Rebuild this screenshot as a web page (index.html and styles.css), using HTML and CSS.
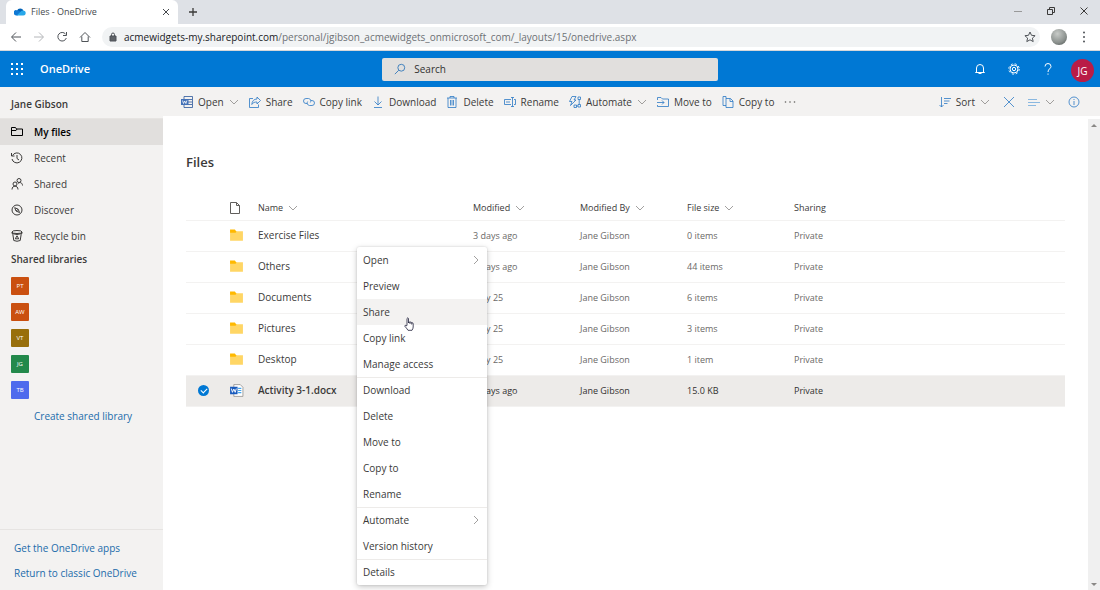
FILE: index.html
```html
<!DOCTYPE html>
<html lang="en">
<head>
  <meta charset="UTF-8">
  <title>Files - OneDrive</title>
  <link rel="stylesheet" href="styles.css">
</head>
<body>
  <!-- shared icons -->
  <svg class="sprite" aria-hidden="true">
    <symbol id="chevron" viewBox="0 0 10 10"><path d="M1 3l4 4 4-4"/></symbol>
    <symbol id="chevron-right" viewBox="0 0 10 10"><path d="M3 1l4 4-4 4"/></symbol>
    <symbol id="folder" viewBox="0 0 14 12">
      <path d="M1 1h4l1 1h7v9H1z" fill="#ffd665"/>
      <path d="M1 .5h4.500l1.500 2L6 3.500H1z" fill="#ffb900"/>
    </symbol>
  </svg>

  <div class="tabs">
    <div class="tab">
      <svg class="cloud" viewBox="0 0 14 10">
        <path d="M3.500 3.500A4 4 0 0 1 11 3.300L7 6z" fill="#0364b8"/>
        <path d="M1 8.500A3 3 0 0 1 4 3.200c2-.2 3 1.300 5 1.800L4 9H3Q1.700 9.200 1 8.500z" fill="#0f78d4"/>
        <path d="M8 4.500Q9 3 11 3.300A3 3 0 0 1 13.500 7q0 2-2.500 2H3z" fill="#28a8ea"/>
      </svg>
      <span>Files - OneDrive</span>
      <button class="tab-close" aria-label="Close tab">
        <svg viewBox="0 0 8 8"><path d="M1 1l6 6M7 1L1 7"/></svg>
      </button>
    </div>
    <button class="tab-new" aria-label="New tab">
      <svg viewBox="0 0 10 10"><path d="M5 1v8M1 5h8"/></svg>
    </button>
    <div class="window-buttons">
      <button aria-label="Minimize"><svg viewBox="0 0 8 8"><path d="M0 4.500h8" stroke="#999"/></svg></button>
      <button aria-label="Restore"><svg viewBox="0 0 8 8"><path d="M.5 2.500h5v5h-5zM2.500 2V.5h5v5H6"/></svg></button>
      <button aria-label="Close"><svg viewBox="0 0 8 8"><path d="M.5.5l7 7M7.500.5l-7 7"/></svg></button>
    </div>
  </div>

  <div class="address-bar">
    <button aria-label="Back"><svg viewBox="0 0 12 12"><path d="M11 6H2M6 1.500L1.500 6 6 10.500"/></svg></button>
    <button aria-label="Forward" class="disabled"><svg viewBox="0 0 12 12"><path d="M1 6h9M6 1.500L10.500 6 6 10.500"/></svg></button>
    <button aria-label="Reload"><svg viewBox="0 0 12 12"><path d="M9.500 3A4.300 4.300 0 1 0 10.300 7M10.500 1v3.500H7"/></svg></button>
    <button aria-label="Home"><svg viewBox="0 0 12 12"><path d="M1 6.500L6 1.500l5 5M2.800 5.500V10.500h6.400V5.500"/></svg></button>
    <div class="url">
      <svg class="lock" viewBox="0 0 8 10"><path d="M1 4h6v5H1z" fill="#5f6368"/><path d="M2.500 4V2.500a1.500 1.500 0 0 1 3 0V4"/></svg>
      <span class="url-text"><span class="host">acmewidgets-my.sharepoint.com</span>/personal/jgibson_acmewidgets_onmicrosoft_com/_layouts/15/onedrive.aspx</span>
      <button aria-label="Bookmark"><svg class="star" viewBox="0 0 12 12"><path d="M6 1l1.500 3.300 3.600.4-2.700 2.400.8 3.500L6 8.800l-3.200 1.800.8-3.500L.9 4.700l3.600-.4z"/></svg></button>
    </div>
    <span class="profile"></span>
    <button aria-label="Menu" class="more"><svg viewBox="0 0 12 12"><circle cx="6" cy="1.500" r="1"/><circle cx="6" cy="6" r="1"/><circle cx="6" cy="10.500" r="1"/></svg></button>
  </div>

  <header class="suite">
    <button class="waffle" aria-label="App launcher">
      <svg viewBox="0 0 12 12"><path d="M0 1h2m3 0h2m3 0h2M0 6h2m3 0h2m3 0h2M0 11h2m3 0h2m3 0h2"/></svg>
    </button>
    <a class="brand" href="#">OneDrive</a>
    <label class="search">
      <svg viewBox="0 0 14 14"><circle cx="8.500" cy="5.500" r="4"/><path d="M5.500 8.500L1 13"/></svg>
      <input type="search" placeholder="Search" aria-label="Search">
    </label>
    <div class="suite-actions">
      <button aria-label="Notifications"><svg viewBox="0 0 12 12"><path d="M2.500 9V5a3.500 3.500 0 0 1 7 0v4l1 .5h-9zM4.500 10.500h3"/></svg></button>
      <button aria-label="Settings"><svg viewBox="0 0 12 12"><circle cx="6" cy="6" r="1.700"/><circle cx="6" cy="6" r="4"/><circle class="teeth" cx="6" cy="6" r="5.200"/></svg></button>
      <button aria-label="Help"><svg viewBox="0 0 12 12"><path d="M3 3.500a3 3 0 0 1 6 0C9 5.500 6 6 6 9M6 10.500v1.200"/></svg></button>
      <button class="avatar">JG</button>
    </div>
  </header>

  <div class="app">
    <aside class="sidebar">
      <div class="owner">Jane Gibson</div>
      <nav>
        <a class="nav-item active" href="#"><svg viewBox="0 0 12 12"><path d="M.5 1.500h4l1 1.500h6v6.500H.5zM.5 4.500h4.500l1-1.500"/></svg>My files</a>
        <a class="nav-item" href="#"><svg viewBox="0 0 12 12"><path d="M1.500 3.500A5 5 0 1 1 1 7M.5 1v3h3M6 3v3.500l2 1.500"/></svg>Recent</a>
        <a class="nav-item" href="#"><svg viewBox="0 0 12 12"><circle cx="4" cy="6" r="2"/><circle cx="8" cy="2.500" r="2"/><path d="M1 11.500c0-4.500 6-4.500 6 0M7 5.500c2-2 4.500-.5 4.500 2"/></svg>Shared</a>
        <a class="nav-item" href="#"><svg viewBox="0 0 12 12"><circle cx="6" cy="6" r="5"/><path d="M3.700 3.700l3.500 1.500 1.300 3.300L5 7zM5 7l2-1.500"/></svg>Discover</a>
        <a class="nav-item" href="#"><svg viewBox="0 0 12 12"><ellipse cx="6" cy="2" rx="5" ry="1.500"/><path d="M1 2v1.500q5 2 10 0V2M1.800 4.200l1 6.300q3.200 1.500 6.400 0l1-6.300M4.300 8.800L6 5.800l1.700 3z"/></svg>Recycle bin</a>
      </nav>
      <h2>Shared libraries</h2>
      <ul class="libraries">
        <li><a class="tile orange" href="#">PT</a></li>
        <li><a class="tile orange" href="#">AW</a></li>
        <li><a class="tile olive" href="#">VT</a></li>
        <li><a class="tile green" href="#">JG</a></li>
        <li><a class="tile blue" href="#">TB</a></li>
      </ul>
      <a class="create" href="#">Create shared library</a>
      <div class="sidebar-footer">
        <a href="#">Get the OneDrive apps</a>
        <a href="#">Return to classic OneDrive</a>
      </div>
    </aside>

    <main>
      <div class="toolbar">
        <button><svg viewBox="0 0 12 12"><path d="M3 3V.5h8.500v11H3V9M7 3.500h4M7 6h4M7 8.500h4" stroke="#2b579a"/><path d="M0 3h7.500v6H0z" fill="#4472b8" stroke="none"/><path d="M1.500 4.500l1 3 1.200-2.500 1.200 2.500 1-3" stroke="#fff"/></svg>Open<svg class="chevron"><use href="#chevron"/></svg></button>
        <button><svg viewBox="0 0 12 12"><path d="M4 2.500H.5v9h9V8.500M8 1l3.500 3.500L8 8V6C5.500 6 4 6.500 2.800 8.500 3 5 5 3 8 3z"/></svg>Share</button>
        <button><svg viewBox="0 0 12 12"><path d="M4 7.500H3a2.500 2.500 0 0 1 0-5h2.500a2.500 2.500 0 0 1 1.800 4M8 4.500h1a2.500 2.500 0 0 1 0 5H6.500a2.500 2.500 0 0 1-1.800-4"/></svg>Copy link</button>
        <button><svg viewBox="0 0 12 12"><path d="M6 .5V9M2.500 5.500L6 9l3.500-3.500M2 11.500h8"/></svg>Download</button>
        <button><svg viewBox="0 0 12 12"><path d="M1 2h10M4 2V.5h4V2M2 2v9.500h8V2M4.500 4v5.500M6 4v5.500M7.500 4v5.500"/></svg>Delete</button>
        <button><svg viewBox="0 0 12 12"><path d="M7 3.500H.5v5H7M2 6h4M8.500 1.500v9M7 1.500h3M7 10.500h3M10 3.500h1.500v5H10"/></svg>Rename</button>
        <button><svg viewBox="0 0 12 12"><path d="M3 .5h4L5 4h2L1.500 9.500 3 5.500H.5zM9 1h2.500v2.500H9zM9 8.500h2.500V11H9zM5 9h2.500v2.500H5zM10.200 3.500v5M7.500 10H9"/></svg>Automate<svg class="chevron"><use href="#chevron"/></svg></button>
        <button><svg viewBox="0 0 12 12"><path d="M.5 4V1.500H4L5.500 3h6v7.500H.5V9M0 6.500h7M5 4.500l2 2-2 2"/></svg>Move to</button>
        <button><svg viewBox="0 0 12 12"><path d="M4 2.500V.5H1v9h3M4 2.500h4.500L11 5v6.500H4zM8 2.500v3h3"/></svg>Copy to</button>
        <button class="overflow" aria-label="More"><svg viewBox="0 0 12 12"><circle cx="1.500" cy="6" r=".8"/><circle cx="6" cy="6" r=".8"/><circle cx="10.500" cy="6" r=".8"/></svg></button>
        <div class="toolbar-right">
          <button><svg viewBox="0 0 12 12"><path d="M2.500 1v10M.5 9l2 2 2-2M5 2.500h7M5 5h5.500M5 7.500h3.500"/></svg>Sort<svg class="chevron"><use href="#chevron"/></svg></button>
          <button aria-label="Clear selection"><svg viewBox="0 0 12 12"><path d="M1 1l10 10M11 1L1 11"/></svg></button>
          <button aria-label="View options"><svg viewBox="0 0 12 12"><path d="M0 3.500h9M0 6.500h12M0 9.500h8" stroke="#6fa8dc"/></svg><svg class="chevron"><use href="#chevron"/></svg></button>
          <button aria-label="Information"><svg viewBox="0 0 12 12"><circle cx="6" cy="6" r="5"/><path d="M6 5v4M6 3v1"/></svg></button>
        </div>
      </div>

      <div class="content">
        <div class="files">
          <h1>Files</h1>
          <table>
            <colgroup>
              <col class="col-check"><col class="col-icon"><col class="col-name">
              <col class="col-meta"><col class="col-meta"><col class="col-meta"><col>
            </colgroup>
            <thead>
              <tr>
                <th></th>
                <th><svg class="page" viewBox="0 0 10 12"><path d="M.5.5h6l3 3v8h-9zM6.500.5v3h3"/></svg></th>
                <th><button>Name<svg class="chevron"><use href="#chevron"/></svg></button></th>
                <th><button>Modified<svg class="chevron"><use href="#chevron"/></svg></button></th>
                <th><button>Modified By<svg class="chevron"><use href="#chevron"/></svg></button></th>
                <th><button>File size<svg class="chevron"><use href="#chevron"/></svg></button></th>
                <th>Sharing</th>
              </tr>
            </thead>
            <tbody>
              <tr>
                <td><input type="checkbox" aria-label="Select Exercise Files"></td>
                <td><svg class="folder"><use href="#folder"/></svg></td>
                <td><a href="#">Exercise Files</a></td>
                <td>3 days ago</td><td>Jane Gibson</td><td>0 items</td><td>Private</td>
              </tr>
              <tr>
                <td><input type="checkbox" aria-label="Select Others"></td>
                <td><svg class="folder"><use href="#folder"/></svg></td>
                <td><a href="#">Others</a></td>
                <td>3 days ago</td><td>Jane Gibson</td><td>44 items</td><td>Private</td>
              </tr>
              <tr>
                <td><input type="checkbox" aria-label="Select Documents"></td>
                <td><svg class="folder"><use href="#folder"/></svg></td>
                <td><a href="#">Documents</a></td>
                <td>May 25</td><td>Jane Gibson</td><td>6 items</td><td>Private</td>
              </tr>
              <tr>
                <td><input type="checkbox" aria-label="Select Pictures"></td>
                <td><svg class="folder"><use href="#folder"/></svg></td>
                <td><a href="#">Pictures</a></td>
                <td>May 25</td><td>Jane Gibson</td><td>3 items</td><td>Private</td>
              </tr>
              <tr>
                <td><input type="checkbox" aria-label="Select Desktop"></td>
                <td><svg class="folder"><use href="#folder"/></svg></td>
                <td><a href="#">Desktop</a></td>
                <td>May 25</td><td>Jane Gibson</td><td>1 item</td><td>Private</td>
              </tr>
              <tr class="selected">
                <td><input type="checkbox" aria-label="Select Activity 3-1.docx" checked></td>
                <td>
                  <svg class="folder" viewBox="0 0 14 12">
                    <path d="M4.500.5h6L13 3v8.500H4.500z" fill="#fff" stroke="#8a8886" stroke-width=".7"/>
                    <path d="M8.500 4h3M8.500 6h3M8.500 8h3" stroke="#41a5ee"/>
                    <path d="M1 2.500h7v7H1z" fill="#185abd"/>
                    <path d="M2.200 4.200l1 3.500 1.300-3 1.300 3 1-3.500" fill="none" stroke="#fff" stroke-width=".9"/>
                  </svg>
                </td>
                <td><a href="#">Activity 3-1.docx</a></td>
                <td>3 days ago</td><td>Jane Gibson</td><td>15.0 KB</td><td>Private</td>
              </tr>
            </tbody>
          </table>
        </div>
        <div class="scrollbar">
          <svg viewBox="0 0 6 3"><path d="M0 3l3-3 3 3z"/></svg>
          <svg viewBox="0 0 6 3"><path d="M0 0l3 3 3-3z"/></svg>
        </div>
      </div>

      <div class="context-menu" role="menu">
        <button role="menuitem">Open<svg class="chevron"><use href="#chevron-right"/></svg></button>
        <button role="menuitem">Preview</button>
        <button role="menuitem" class="hover">Share</button>
        <button role="menuitem">Copy link</button>
        <button role="menuitem">Manage access</button>
        <button role="menuitem" class="divided">Download</button>
        <button role="menuitem">Delete</button>
        <button role="menuitem">Move to</button>
        <button role="menuitem">Copy to</button>
        <button role="menuitem">Rename</button>
        <button role="menuitem" class="divided">Automate<svg class="chevron"><use href="#chevron-right"/></svg></button>
        <button role="menuitem">Version history</button>
        <button role="menuitem" class="divided">Details</button>
        <svg class="pointer" viewBox="0 0 10 14"><path d="M3 8.500V1.500q1-1.500 1.500 0V6q0-1.500 1.500-.8 1.300-.7 1.700.5 1.500-.3 1.500 1.300V10q-.2 2-1.200 3.300H4Q2.500 11 .8 9.200.5 7.500 3 8.800M6 5.300V7M7.700 5.800V7.500"/></svg>
      </div>
    </main>
  </div>
</body>
</html>
```
FILE: styles.css
```css
* {
  box-sizing: border-box;
}

body {
  margin: 0;
  height: 100vh;
  display: flex;
  flex-direction: column;
  overflow: hidden;
  font-family: "Open Sans", "Segoe UI", sans-serif;
  font-size: 10px;
  line-height: 14px;
  color: #3b3a39;
  background: #fff;
}

button {
  display: flex;
  align-items: center;
  padding: 0;
  border: none;
  background: none;
  font: inherit;
  color: inherit;
  cursor: pointer;
}

a {
  color: inherit;
  text-decoration: none;
}

svg {
  width: 12px;
  height: 12px;
  flex: none;
  fill: none;
  stroke: currentColor;
  display: block;
}

.sprite {
  position: absolute;
  width: 0;
  height: 0;
}

.chevron {
  width: 10px;
  height: 10px;
  color: #8a8886;
  stroke-width: 0.8;
}

/* browser window */
.tabs {
  height: 24px;
  flex: none;
  display: flex;
  align-items: center;
  padding-left: 6px;
  background: #dee1e6;
}

.tab {
  width: 172px;
  height: 24px;
  display: flex;
  align-items: center;
  gap: 5px;
  padding: 0 8px;
  border-radius: 6px 6px 0 0;
  background: #fff;
  font-size: 9px;
  color: #45494d;
}

.cloud {
  height: 10px;
  stroke: none;
}

.tab-close {
  margin-left: auto;
}

.tab-close svg,
.window-buttons svg {
  width: 8px;
  height: 8px;
}

.tab-new {
  margin-left: 10px;
}

.tab-new svg {
  width: 10px;
  height: 10px;
  stroke-width: 1.3;
}

.window-buttons {
  display: flex;
  gap: 25px;
  margin-left: auto;
  padding: 0 12px 2px 0;
}

.address-bar {
  height: 27px;
  flex: none;
  display: flex;
  align-items: center;
  gap: 11px;
  padding: 0 10px;
  border-bottom: 1px solid #d5d7da;
  color: #4f5358;
}

.disabled {
  color: #b4b6b9;
}

.url {
  flex: 1;
  height: 20px;
  display: flex;
  align-items: center;
  gap: 7px;
  padding: 0 4px 0 7px;
  border-radius: 10px;
  background: #f1f3f4;
}

.lock {
  width: 8px;
  height: 10px;
}

.url-text {
  flex: 1;
  color: #6d7175;
}

.host {
  color: #202124;
}

.profile {
  width: 16px;
  height: 16px;
  border-radius: 50%;
  background: radial-gradient(circle at 40% 30%, #c8cbc8, #8b918e 60%, #454b49);
}

.more svg,
.overflow svg {
  fill: currentColor;
  stroke: none;
}

/* suite header */
.suite {
  height: 36px;
  flex: none;
  display: grid;
  grid-template-columns: 1fr auto 1fr;
  grid-template-areas: "brand search actions";
  align-items: center;
  background: #0078d4;
  color: #fff;
}

.waffle {
  grid-area: brand;
  justify-self: start;
  margin-left: 11px;
}

.waffle svg {
  stroke-width: 2;
}

.brand {
  grid-area: brand;
  justify-self: start;
  margin-left: 40px;
  font-size: 11px;
  font-weight: 600;
}

.search {
  grid-area: search;
  width: 30.5vw;
  height: 23px;
  display: flex;
  align-items: center;
  gap: 8px;
  padding: 0 12px;
  border-radius: 2px;
  background: #e1dfdd;
  color: #2b74b8;
}

.search input {
  flex: 1;
  min-width: 0;
  border: none;
  outline: none;
  padding: 0;
  background: none;
  font: inherit;
  color: #323130;
}

.search input::placeholder {
  color: #323130;
}

.suite-actions {
  grid-area: actions;
  display: flex;
  align-items: center;
  justify-content: flex-end;
  gap: 22px;
  padding-right: 6px;
}

.teeth {
  stroke-dasharray: 2 2.1;
}

.avatar {
  width: 23px;
  height: 23px;
  margin: 3px 0 0 -5px;
  justify-content: center;
  border-radius: 50%;
  background: #b91c46;
}

/* app */
.app {
  flex: 1;
  min-height: 0;
  display: flex;
}

.sidebar {
  width: 163px;
  flex: none;
  display: flex;
  flex-direction: column;
  background: #f3f2f1;
}

.owner {
  height: 32px;
  padding: 10px 11px 0;
  font-weight: 600;
  border-bottom: 1px solid #e6e4e2;
}

.nav-item {
  height: 26px;
  display: flex;
  align-items: center;
  gap: 11px;
  padding: 0 11px;
}

.active {
  background: #e1dfdd;
  font-weight: 600;
  color: #000;
}

.sidebar h2 {
  margin: 3px 11px 11px;
  font-size: 10px;
  line-height: 14px;
  font-weight: 600;
}

.libraries {
  display: grid;
  gap: 8px;
  margin: 0;
  padding: 0 11px;
  list-style: none;
}

.tile {
  width: 18px;
  height: 18px;
  display: flex;
  align-items: center;
  justify-content: center;
  border-radius: 1px;
  font-size: 6px;
  color: #fff;
}

.orange {
  background: #ca5010;
}

.olive {
  background: #986f0b;
}

.green {
  background: #23894b;
}

.blue {
  background: #4f6bed;
}

.create,
.sidebar-footer {
  color: #1b6cab;
}

.create {
  margin: 10px 0 0 34px;
}

.sidebar-footer {
  display: grid;
  gap: 11px;
  margin-top: auto;
  padding: 11px 14px 10px;
  border-top: 1px solid #e6e4e2;
}

main {
  flex: 1;
  min-width: 0;
  position: relative;
  display: flex;
  flex-direction: column;
}

.toolbar {
  height: 29px;
  flex: none;
  display: flex;
  align-items: center;
  gap: 10px;
  padding: 0 20px 0 18px;
  background: #f3f2f1;
}

.toolbar button {
  gap: 5px;
}

.toolbar svg:not(.chevron) {
  color: #2b78c5;
  stroke-width: 0.8;
}

.toolbar .overflow svg {
  color: #605e5c;
}

.toolbar-right {
  display: flex;
  gap: 13px;
  margin-left: auto;
}

.content {
  flex: 1;
  min-height: 0;
  display: flex;
  padding-top: 3px;
}

.files {
  flex: 1;
  padding: 33px 23px 0;
}

h1 {
  margin: 0 0 24px;
  font-size: 13px;
  line-height: 20px;
  font-weight: 600;
}

table {
  width: 100%;
  table-layout: fixed;
  border-collapse: collapse;
  font-size: 9px;
}

.col-check {
  width: 43px;
}

.col-icon {
  width: 29px;
}

.col-name {
  width: 215px;
}

.col-meta {
  width: 107px;
}

th,
td {
  height: 31px;
  padding: 0;
  text-align: left;
  font-weight: 400;
  border-bottom: 1px solid #f3f2f1;
}

th {
  height: 24px;
}

th button {
  gap: 5px;
}

td {
  color: #6b6967;
}

td a {
  font-size: 10px;
  color: #3b3a39;
}

.page {
  color: #605e5c;
}

.folder {
  width: 15px;
  height: 13px;
  stroke: none;
}

.selected td {
  background: #edebe9;
  color: #323130;
}

.selected a {
  font-weight: 600;
}

td input {
  appearance: none;
  display: block;
  width: 11px;
  height: 11px;
  margin: 0 0 0 12px;
  border-radius: 50%;
}

td input:checked {
  display: flex;
  align-items: center;
  justify-content: center;
  background: #0078d4;
}

td input:checked::before {
  content: "";
  width: 5px;
  height: 3px;
  margin-bottom: 1px;
  border: solid #fff;
  border-width: 0 0 1px 1px;
  rotate: -45deg;
}

.scrollbar {
  width: 12px;
  display: flex;
  flex-direction: column;
  align-items: center;
  justify-content: space-between;
  padding: 5px 0 4px;
  background: #f0f0f0;
}

.scrollbar svg {
  width: 6px;
  height: 3px;
  fill: #8a8886;
  stroke: none;
}

/* context menu */
.context-menu {
  position: absolute;
  left: 194px;
  top: 160px;
  width: 130px;
  border-radius: 2px;
  background: #fff;
  box-shadow: 0 2px 6px rgba(0, 0, 0, 0.22), 0 0 2px rgba(0, 0, 0, 0.15);
}

.context-menu button {
  width: 100%;
  height: 26px;
  justify-content: space-between;
  padding: 0 6px;
}

.context-menu .divided {
  box-shadow: inset 0 1px #edebe9;
}

.context-menu .hover {
  background: #f3f2f1;
}

.pointer {
  position: absolute;
  left: 47px;
  top: 70px;
  width: 10px;
  height: 14px;
  fill: #fff;
  stroke: #1f1f3a;
  stroke-width: 0.8;
}
```
